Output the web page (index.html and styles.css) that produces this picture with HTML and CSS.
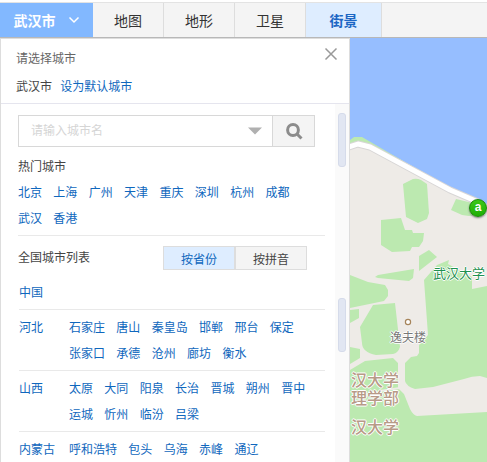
FILE: index.html
```
<!DOCTYPE html>
<html lang="zh-CN">

<head>
    <title>武汉市 街景</title>
    <meta charset="utf-8">
    <link rel="stylesheet" href="styles.css">
</head>

<body>
    <nav class="toolbar">
        <button class="city_button" type="button">武汉市
            <svg class="chevron" width="12" height="8" viewBox="0 0 12 8"><path d="M1.5 1.5 L6 6 L10.5 1.5"/></svg>
        </button>
        <button class="tab" type="button">地图</button>
        <button class="tab" type="button">地形</button>
        <button class="tab" type="button">卫星</button>
        <button class="tab tab_active" type="button">街景</button>
    </nav>

    <main class="content">
        <aside class="panel">
            <header class="panel_header">
                <div>
                    <div class="panel_title">请选择城市</div>
                    <div class="current_city">武汉市 <a class="set_default" href="#">设为默认城市</a></div>
                </div>
                <button class="close_button" type="button" aria-label="关闭">
                    <svg width="14" height="14" viewBox="0 0 14 14"><path d="M1.5 1.5 L12.5 12.5 M12.5 1.5 L1.5 12.5"/></svg>
                </button>
            </header>

            <div class="panel_body">
                <div class="city_content">
                    <form class="search">
                        <input class="search_input" type="text" placeholder="请输入城市名" aria-label="城市名">
                        <button class="drop_button" type="button" aria-label="展开">
                            <svg width="14" height="8" viewBox="0 0 14 8"><path d="M0 0.5 H14 L7 7.5 Z"/></svg>
                        </button>
                        <button class="search_button" type="button" aria-label="搜索">
                            <svg width="18" height="18" viewBox="0 0 18 18"><circle cx="8" cy="8" r="5.4"/><path d="M12 12 L16.5 16.5"/></svg>
                        </button>
                    </form>

                    <section class="hot">
                        <h2 class="section_title">热门城市</h2>
                        <div class="cities">
                            <a href="#">北京</a>
                            <a href="#">上海</a>
                            <a href="#">广州</a>
                            <a href="#">天津</a>
                            <a href="#">重庆</a>
                            <a href="#">深圳</a>
                            <a href="#">杭州</a>
                            <a href="#">成都</a>
                            <a href="#">武汉</a>
                            <a href="#">香港</a>
                        </div>
                    </section>

                    <div class="list_header">
                        <h2 class="section_title">全国城市列表</h2>
                        <div class="sort">
                            <button class="sort_button sort_active" type="button">按省份</button>
                            <button class="sort_button" type="button">按拼音</button>
                        </div>
                    </div>

                    <div class="provinces">
                        <div class="province">
                            <a class="province_name" href="#">中国</a>
                        </div>
                        <div class="province">
                            <a class="province_name" href="#">河北</a>
                            <div class="cities">
                                <a href="#">石家庄</a>
                                <a href="#">唐山</a>
                                <a href="#">秦皇岛</a>
                                <a href="#">邯郸</a>
                                <a href="#">邢台</a>
                                <a href="#">保定</a>
                                <a href="#">张家口</a>
                                <a href="#">承德</a>
                                <a href="#">沧州</a>
                                <a href="#">廊坊</a>
                                <a href="#">衡水</a>
                            </div>
                        </div>
                        <div class="province">
                            <a class="province_name" href="#">山西</a>
                            <div class="cities">
                                <a href="#">太原</a>
                                <a href="#">大同</a>
                                <a href="#">阳泉</a>
                                <a href="#">长治</a>
                                <a href="#">晋城</a>
                                <a href="#">朔州</a>
                                <a href="#">晋中</a>
                                <a href="#">运城</a>
                                <a href="#">忻州</a>
                                <a href="#">临汾</a>
                                <a href="#">吕梁</a>
                            </div>
                        </div>
                        <div class="province">
                            <a class="province_name" href="#">内蒙古</a>
                            <div class="cities">
                                <a href="#">呼和浩特</a>
                                <a href="#">包头</a>
                                <a href="#">乌海</a>
                                <a href="#">赤峰</a>
                                <a href="#">通辽</a>
                            </div>
                        </div>
                    </div>
                </div>
                <div class="track">
                    <div class="thumb"></div>
                    <div class="thumb"></div>
                </div>
            </div>
        </aside>

        <div class="map">
            <svg class="map_canvas">
                <!-- lake -->
                <path class="water" d="M0 0 H2000 V1000 L137 166 L100 149 L22 106 L0 102 Z"/>
                <!-- green areas -->
                <g class="green">
                    <path d="M0 102 L4 99 L12 99 L24 106 L60 127 L100 149 L127 163 L100 153 L20 111 L0 108 Z"/>
                    <path d="M53 146 L63 141 Q67 140 71 142 L77 146 L79 175 L77 181 L68 185 L56 179 Z"/>
                    <path d="M106 161 L127 166 L135 176 L119 178 L112 177 L101 172 Z"/>
                    <path d="M31 182 L51 180 L55 192 L62 192 L63 195 L74 195 L73 203 L69 209 L62 209 L60 213 L42 214 L31 207 Z"/>
                    <path d="M79 212 L87 219 L69 233 L69 218 Z"/>
                    <path d="M25 239 L28 237 L64 231 L63 240 L59 243 L28 240 Z"/>
                    <path d="M0 237 L18 244 L35 247 L38 252 L38 258 L34 263 L0 270 Z"/>
                    <path d="M74 242 L87 227 L99 222 L98 226 L122 239 L122 251 L137 248 L2000 248 V340 H137 L130 338 Q122 338 114 341 L83 349 L65 351 Q56 348 55 343 L55 325 L61 319 L67 318 L69 315 L69 307 L78 297 Z"/>
                    <path d="M23 267 L45 265 L50 309 Q48 315 43 316 L26 317 Q12 314 12 305 L10 289 Z"/>
                    <path d="M0 272 L9 271 V280 L0 285 Z"/>
                    <path d="M0 309 L10 311 V320 L0 326 Z"/>
                    <path d="M0 332 L15 323 L43 320 L48 325 L48 350 L54 356 L60 371 Q63 377 67 378 L137 374 L2000 374 V1000 H0 Z"/>
                </g>
                <path class="path_line" d="M30 353 L50 350"/>
                <!-- lakeside road -->
                <path class="road_edge" d="M-4 110 L8 106 L20 109 L100 152 L128 164"/>
                <path class="road" d="M-4 110 L8 106 L20 109 L100 152 L128 164"/>
                <circle class="poi" cx="58" cy="284" r="2.6"/>
            </svg>
            <span class="marker">a</span>
            <span class="label label_school">武汉大学</span>
            <span class="label label_building">逸夫楼</span>
            <span class="label label_campus">汉大学<br>理学部</span>
            <span class="label label_university">汉大学</span>
        </div>
    </main>
</body>

</html>
```
FILE: styles.css
```
:root {
    --link: #0f67bd;
    --text: #444;
    --line: #e9e9e9;
    --border: #ddd;
    --active: #deedff;
    --gray: #f4f4f4;
}

* {
    box-sizing: border-box;
}

body {
    margin: 0;
    padding-top: 2px;
    height: 100vh;
    display: flex;
    flex-direction: column;
    overflow: hidden;
    background: white;
    color: var(--text);
    font: 12px "Liberation Sans", "Noto Sans CJK SC", sans-serif;
}

button {
    padding: 0;
    border: none;
    background: none;
    color: inherit;
    font: inherit;
    cursor: pointer;
}

a {
    color: var(--link);
    text-decoration: none;
}

svg {
    display: block;
}

.toolbar {
    display: flex;
    flex: none;
    height: 36px;
    background: var(--gray);
    border-top: 1px solid #e3e3e3;
    border-bottom: 1px solid #b8b8b8;
    font-size: 14px;
}

.city_button {
    display: flex;
    align-items: center;
    justify-content: center;
    gap: 12px;
    width: 93px;
    background: #82b8ff;
    color: white;
    font-weight: bold;
}

.chevron {
    fill: none;
    stroke: white;
    stroke-width: 1.5;
}

.tab {
    width: 71px;
    border-right: 1px solid var(--border);
    color: #333;
}

.tab_active {
    width: 76px;
    background: var(--active);
    color: #1c66c4;
    font-weight: bold;
}

.content {
    display: flex;
    flex: 1;
    min-height: 0;
}

.panel {
    display: flex;
    flex-direction: column;
    flex: none;
    width: 350px;
    border: 1px solid var(--border);
    border-bottom: none;
}

.panel_header {
    display: flex;
    justify-content: space-between;
    align-items: flex-start;
    flex: none;
    padding: 6px 11px 2px 15px;
    border-bottom: 1px solid #e5e5ee;
    line-height: 28px;
}

.panel_title {
    color: #666;
}

.set_default {
    margin-left: 5px;
}

.close_button {
    margin-top: 2px;
}

.close_button path {
    stroke: #999;
    stroke-width: 1.5;
}

.panel_body {
    display: flex;
    flex: 1;
    min-height: 0;
    overflow: hidden;
}

.city_content {
    flex: 1;
    padding: 11px 10px 0 17px;
}

.search {
    display: flex;
    height: 32px;
    margin-right: 10px;
    border: 1px solid #d8d8d8;
}

.search_input {
    flex: 1;
    min-width: 0;
    padding: 0 0 0 12px;
    border: none;
    outline: none;
    font: inherit;
}

.search_input::placeholder {
    color: #d5d5d5;
}

.drop_button {
    display: flex;
    align-items: center;
    justify-content: center;
    width: 34px;
}

.drop_button path {
    fill: #b0b0b0;
}

.search_button {
    display: flex;
    align-items: center;
    justify-content: center;
    width: 42px;
    border-left: 1px solid #d8d8d8;
    background: var(--gray);
}

.search_button svg {
    fill: none;
    stroke: #8c8c8c;
    stroke-width: 3;
}

.section_title {
    margin: 0;
    font-size: 12px;
    font-weight: normal;
    line-height: 26px;
}

.hot {
    padding: 7px 0 3px;
    border-bottom: 1px solid var(--line);
}

.cities {
    flex: 1;
    line-height: 26px;
}

.cities a {
    margin-right: 8px;
    white-space: nowrap;
}

.list_header {
    display: flex;
    justify-content: space-between;
    align-items: center;
    padding: 9px 18px 9px 0;
}

.sort {
    display: flex;
}

.sort_button {
    width: 72px;
    height: 24px;
    border: 1px solid var(--border);
    background: var(--gray);
}

.sort_active {
    background: var(--active);
    color: var(--link);
}

.provinces {
    padding-left: 1px;
}

.province {
    display: flex;
    padding: 5px 0 3px;
    border-top: 1px solid var(--line);
    line-height: 26px;
}

.province:first-child {
    padding-top: 0;
    border-top: none;
}

.province_name {
    width: 50px;
}

.track {
    display: flex;
    flex-direction: column;
    align-items: center;
    gap: 131px;
    width: 14px;
    padding-top: 9px;
    background: #fafafa;
}

.thumb {
    flex: none;
    width: 8px;
    height: 54px;
    border: 1px solid #d5dbea;
    border-radius: 3px;
    background: #e1e6f2;
}

.map {
    position: relative;
    flex: 1;
    min-width: 0;
    overflow: hidden;
    background: #eeebe7;
}

.map_canvas {
    width: 100%;
    height: 100%;
}

.water {
    fill: #96beff;
}

.green {
    fill: #bce9b0;
}

.road,
.road_edge,
.path_line {
    fill: none;
    stroke: white;
    stroke-width: 5;
    stroke-linejoin: round;
}

.road_edge {
    stroke: #d8d6d6;
    stroke-width: 7;
}

.path_line {
    stroke: #eeebe7;
    stroke-width: 2;
}

.poi {
    fill: white;
    stroke: #a6845a;
    stroke-width: 1.2;
}

.marker {
    position: absolute;
    left: 119px;
    top: 161px;
    width: 18px;
    height: 18px;
    border: 1px solid #188a08;
    border-radius: 50%;
    background: linear-gradient(#3cc81a, #1fae05);
    box-shadow: 0 1px 2px #777;
    color: white;
    font-size: 12px;
    font-weight: bold;
    line-height: 14px;
    text-align: center;
}

.label {
    position: absolute;
    white-space: nowrap;
    text-shadow: 1px 0 white, -1px 0 white, 0 1px white, 0 -1px white;
}

.label_school {
    left: 83px;
    top: 227px;
    color: #1f9150;
    font-size: 13px;
    line-height: 18px;
}

.label_building {
    left: 40px;
    top: 291px;
    color: #777;
    line-height: 18px;
}

.label_campus,
.label_university {
    left: 1px;
    color: #b79a87;
    font-size: 16px;
    font-weight: 500;
    line-height: 18px;
}

.label_campus {
    top: 334px;
}

.label_university {
    top: 381px;
}
```
